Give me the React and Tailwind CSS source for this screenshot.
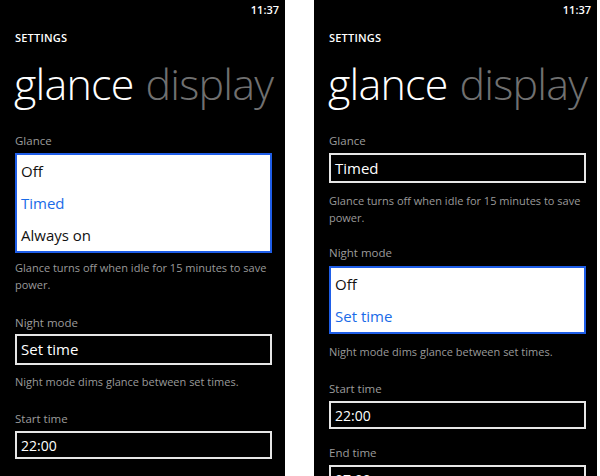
import React from "react";

const font = { fontFamily: '"Open Sans", "Noto Sans", sans-serif' };

function Status() {
  return (
    <div className="h-[20px] flex items-center justify-end pr-[6px] text-[11px] text-white font-semibold">
      11:37
    </div>
  );
}

function Header() {
  return (
    <>
      <Status />
      <div className="mt-[11px] pl-[15px] h-[14px] leading-[14px] text-[11px] font-semibold text-white tracking-[0.2px]">
        SETTINGS
      </div>
      <div className="mt-[13px] pl-[14px] h-[48px] leading-[52px] text-[43px] font-light whitespace-nowrap tracking-[-0.8px]">
        <span className="text-white">glance</span>
        <span className="text-[#707070] ml-[12px]">display</span>
      </div>
    </>
  );
}

function Label({ children, className = "" }) {
  return (
    <div className={"pl-[15px] h-[16px] leading-[16px] text-[11.5px] text-[#9c9c9c] " + className}>
      {children}
    </div>
  );
}

function Helper({ lines, className = "" }) {
  return (
    <div className={"pl-[15px] text-[11px] leading-[17px] text-[#9a9a9a] " + className}>
      {lines.map((l) => (
        <div key={l} className="whitespace-nowrap">{l}</div>
      ))}
    </div>
  );
}

function Closed({ value, h = "h-[31px]", size = "text-[15px]", className = "" }) {
  return (
    <div className={"ml-[15px] w-[257px] border-2 border-[#e6e6e6] flex items-center pl-[4px] text-white " + h + " " + size + " " + className}>
      {value}
    </div>
  );
}

function Open({ items, selected, className = "" }) {
  return (
    <div className={"ml-[15px] w-[257px] border-2 border-[#1f5ee8] bg-white " + className}>
      {items.map((it) => (
        <div
          key={it}
          className={"h-[32px] flex items-center pl-[4px] text-[15px] " + (it === selected ? "text-[#1a6be8]" : "text-[#111]")}
        >
          {it}
        </div>
      ))}
    </div>
  );
}

function LeftPhone() {
  return (
    <div className="w-[285px] h-full bg-black overflow-hidden" style={font}>
      <Header />
      <Label className="mt-[27px]">Glance</Label>
      <Open className="mt-[4px]" items={["Off", "Timed", "Always on"]} selected="Timed" />
      <Helper className="mt-[6px]" lines={["Glance turns off when idle for 15 minutes to save", "power."]} />
      <Label className="mt-[22px]">Night mode</Label>
      <Closed className="mt-[3px]" value="Set time" />
      <Helper className="mt-[8px]" lines={["Night mode dims glance between set times."]} />
      <Label className="mt-[21px]">Start time</Label>
      <Closed className="mt-[4px]" value="22:00" h="h-[28px]" size="text-[14px]" />
    </div>
  );
}

function RightPhone() {
  return (
    <div className="ml-[29px] w-[283px] h-full bg-black overflow-hidden" style={font}>
      <Header />
      <Label className="mt-[27px]">Glance</Label>
      <Closed className="mt-[4px]" value="Timed" h="h-[30px]" />
      <Helper className="mt-[9px]" lines={["Glance turns off when idle for 15 minutes to save", "power."]} />
      <Label className="mt-[19px]">Night mode</Label>
      <Open className="mt-[5px]" items={["Off", "Set time"]} selected="Set time" />
      <Helper className="mt-[9px]" lines={["Night mode dims glance between set times."]} />
      <Label className="mt-[21px]">Start time</Label>
      <Closed className="mt-[4px]" value="22:00" h="h-[28px]" size="text-[14px]" />
      <Label className="mt-[16px]">End time</Label>
      <Closed className="mt-[4px]" value="07:00" h="h-[28px]" size="text-[14px]" />
    </div>
  );
}

export default function App() {
  return (
    <div className="w-[600px] h-[476px] bg-white flex overflow-hidden">
      <LeftPhone />
      <RightPhone />
    </div>
  );
}
